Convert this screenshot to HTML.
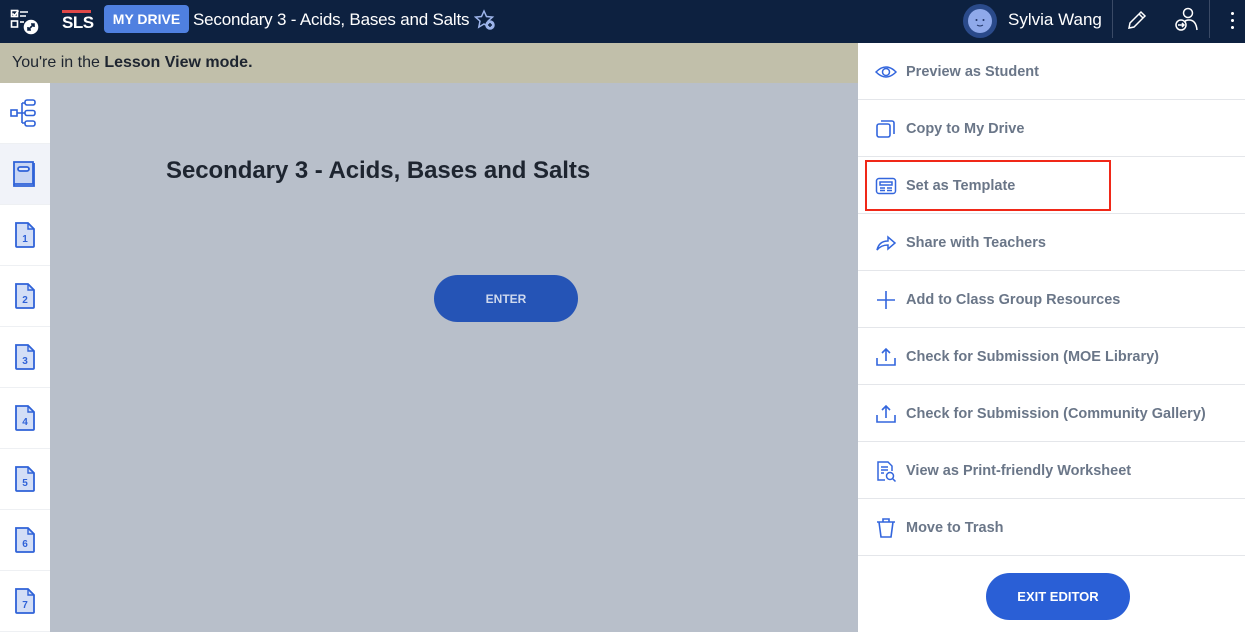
<!DOCTYPE html>
<html><head><meta charset="utf-8">
<style>
*{margin:0;padding:0;box-sizing:border-box}
body{width:1245px;height:632px;overflow:hidden;font-family:"Liberation Sans",sans-serif;background:#b8bfca;position:relative}
.top{position:absolute;left:0;top:0;width:1245px;height:43px;background:#0d2140;color:#fff}
.banner{position:absolute;left:0;top:43px;width:858px;height:40px;background:#c1bfaa;font-size:16px;color:#1e2530;padding:11px 0 0 12px}
.side{position:absolute;left:0;top:83px;width:50px;height:549px;background:#fff}
.side .row{height:61px;border-bottom:1px solid #eef0f3;display:flex;align-items:center;justify-content:center}
.panel{position:absolute;left:858px;top:43px;width:387px;height:589px;background:#fff}
.item{height:57px;border-bottom:1px solid #e4e6ea;display:flex;align-items:center;padding-left:17px;padding-top:2px;font-weight:bold;font-size:14.5px;color:#6a7688}
.item svg{width:22px;height:22px;margin-right:9px;flex:none}
.btn{position:absolute;background:#2a5fd6;color:#fff;font-weight:bold;font-size:13px;border-radius:24px;display:flex;align-items:center;justify-content:center}
</style></head><body>
<div class="top">
  <svg style="position:absolute;left:10px;top:9px" width="30" height="26" viewBox="0 0 30 26" fill="none" stroke="#fff" stroke-width="1.6">
    <rect x="1.5" y="1.5" width="6" height="6"/><path d="M2.5 4.5l2 2 4-5"/><path d="M10 3h8M10 7h6"/>
    <rect x="1.5" y="12" width="6" height="6"/><path d="M10 13h4"/>
    <circle cx="21" cy="18" r="6.5" fill="#fff"/><path d="M18 21l6-6M21 15h3v3M18 18v3h3" stroke="#0d2140"/>
  </svg>
  <div style="position:absolute;left:62px;top:10px;width:29px;height:3px;background:#e04848"></div>
  <div style="position:absolute;left:62px;top:13px;font-weight:bold;font-size:17px;letter-spacing:-0.5px">SLS</div>
  <div style="position:absolute;left:104px;top:5px;width:85px;height:28px;background:#4f80e0;border-radius:4px;font-weight:bold;font-size:14px;text-align:center;line-height:29px">MY DRIVE</div>
  <div style="position:absolute;left:193px;top:10px;font-size:17px;letter-spacing:-0.2px">Secondary 3 - Acids, Bases and Salts</div>
  <svg style="position:absolute;left:474px;top:9px" width="22" height="22" viewBox="0 0 22 22" fill="none" stroke="#9db4ea" stroke-width="1.5">
    <path d="M10 2l2.5 5.5 6 .6-4.5 4 1.2 6L10 15l-5.2 3.1 1.2-6-4.5-4 6-.6z"/><circle cx="16" cy="16" r="4" fill="#9db4ea"/><path d="M16 14v4M14 16h4" stroke="#0d2140"/>
  </svg>
  <svg style="position:absolute;left:962px;top:3px" width="36" height="36" viewBox="0 0 36 36">
    <circle cx="18" cy="18" r="17" fill="#2a4a8a"/><circle cx="18" cy="18" r="12" fill="#8fa9ea"/>
    <circle cx="14.5" cy="17" r="1" fill="#1d3163"/><circle cx="21.5" cy="17" r="1" fill="#1d3163"/><path d="M15 22q3 2 6 0" stroke="#1d3163" fill="none"/>
  </svg>
  <div style="position:absolute;left:1008px;top:10px;font-size:17px">Sylvia Wang</div>
  <div style="position:absolute;left:1112px;top:0;width:1px;height:38px;background:#3a4a66"></div>
  <svg style="position:absolute;left:1125px;top:8px" width="24" height="24" viewBox="0 0 24 24" fill="none" stroke="#fff" stroke-width="1.5"><path d="M4 20l1-5L16 4l4 4L9 19z M14 6l4 4"/></svg>
  <svg style="position:absolute;left:1172px;top:6px" width="28" height="28" viewBox="0 0 28 28" fill="none" stroke="#fff" stroke-width="1.5"><circle cx="16" cy="7" r="4.5"/><path d="M10 24q0-10 7-10t8 10"/><circle cx="9" cy="19" r="5" fill="#0d2140"/><path d="M6 19h6M10 17l2 2-2 2"/></svg>
  <div style="position:absolute;left:1209px;top:0;width:1px;height:38px;background:#3a4a66"></div>
  <div style="position:absolute;left:1231px;top:10px;width:3px;height:20px;background:radial-gradient(circle,#fff 1.4px,transparent 1.6px) 0 0/3px 7px"></div>
</div>
<div class="banner">You're in the <b>Lesson View mode.</b></div>
<div class="side">
  <div class="row"><svg width="30" height="30" viewBox="0 0 30 30" fill="none" stroke="#2f62d8" stroke-width="1.6"><rect x="1" y="12" width="6" height="6"/><path d="M7 15h5M12 5v20M12 5h3M12 25h3M12 15h3"/><rect x="15" y="2" width="10" height="5" rx="2"/><rect x="15" y="12.5" width="10" height="5" rx="2"/><rect x="15" y="23" width="10" height="5" rx="2"/></svg></div>
  <div class="row" style="background:#f1f3f9"><svg width="26" height="30" viewBox="0 0 26 30" fill="none" stroke="#2f62d8" stroke-width="1.8"><path d="M2 3h19v22H2z" fill="#c9d6f4"/><path d="M2 25v2h20V4"/><rect x="6" y="8" width="11" height="4" rx="2" fill="#e6ecfa"/></svg></div>
  <script>
  for(let i=1;i<=7;i++)document.write('<div class="row"><svg width="22" height="28" viewBox="0 0 22 28"><path d="M2 2h12l6 6v17a1 1 0 0 1-1 1H3a1 1 0 0 1-1-1z" fill="#d3def6" stroke="#2f62d8" stroke-width="1.8"/><path d="M14 2v6h6" fill="none" stroke="#2f62d8" stroke-width="1.4"/><text x="11" y="21" text-anchor="middle" font-family="Liberation Sans" font-weight="bold" font-size="10" fill="#2f62d8">'+i+'</text></svg></div>');
  </script>
</div>
<div style="position:absolute;left:166px;top:157px;font-weight:bold;font-size:24px;color:#1e2530;letter-spacing:-0.05px">Secondary 3 - Acids, Bases and Salts</div>
<div class="btn" style="left:434px;top:275px;width:144px;height:47px;background:#2554b6;color:#cfd9ee;font-size:12px">ENTER</div>
<div class="panel">
  <div class="item"><svg viewBox="0 0 22 22" fill="none" stroke="#3366dd" stroke-width="1.5"><path d="M1 11q10-10 20 0q-10 10-20 0z"/><circle cx="11" cy="11" r="3.5"/></svg>Preview as Student</div>
  <div class="item"><svg viewBox="0 0 22 22" fill="none" stroke="#3366dd" stroke-width="1.6"><rect x="2" y="6" width="13" height="13" rx="2"/><path d="M6 3h11a2 2 0 0 1 2 2v11"/></svg>Copy to My Drive</div>
  <div class="item"><svg viewBox="0 0 22 22" fill="none" stroke="#3366dd" stroke-width="1.5"><rect x="1.5" y="3.5" width="19" height="15" rx="2.5"/><rect x="5" y="7" width="12" height="3"/><path d="M5 13h5M5 15.5h5M12 13h5M12 15.5h5"/></svg>Set as Template</div>
  <div class="item"><svg viewBox="0 0 22 22" fill="none" stroke="#3366dd" stroke-width="1.5"><path d="M2 18q2-9 11-9V5l7 6-7 6v-4q-7 0-11 5z"/></svg>Share with Teachers</div>
  <div class="item"><svg viewBox="0 0 22 22" fill="none" stroke="#3366dd" stroke-width="1.6"><path d="M11 2v18M2 11h18"/></svg>Add to Class Group Resources</div>
  <div class="item"><svg viewBox="0 0 22 22" fill="none" stroke="#3366dd" stroke-width="1.6"><path d="M2 12v7h18v-7M11 15V3M7 7l4-4 4 4"/></svg>Check for Submission (MOE Library)</div>
  <div class="item"><svg viewBox="0 0 22 22" fill="none" stroke="#3366dd" stroke-width="1.6"><path d="M2 12v7h18v-7M11 15V3M7 7l4-4 4 4"/></svg>Check for Submission (Community Gallery)</div>
  <div class="item"><svg viewBox="0 0 22 22" fill="none" stroke="#3366dd" stroke-width="1.5"><path d="M10 20H3V2h10l4 4v5"/><path d="M6 7h7M6 10h7M6 13h3"/><circle cx="15" cy="16" r="3.5"/><path d="M17.5 18.5l3 3"/></svg>View as Print-friendly Worksheet</div>
  <div class="item"><svg viewBox="0 0 22 22" fill="none" stroke="#3366dd" stroke-width="1.6"><path d="M2 5h18M8 5V2h6v3M4 5l2 15h10l2-15"/></svg>Move to Trash</div>
  <div class="btn" style="left:128px;top:530px;width:144px;height:47px">EXIT EDITOR</div>
</div>
<div style="position:absolute;left:865px;top:160px;width:246px;height:51px;border:2px solid #f02818"></div>
</body></html>
